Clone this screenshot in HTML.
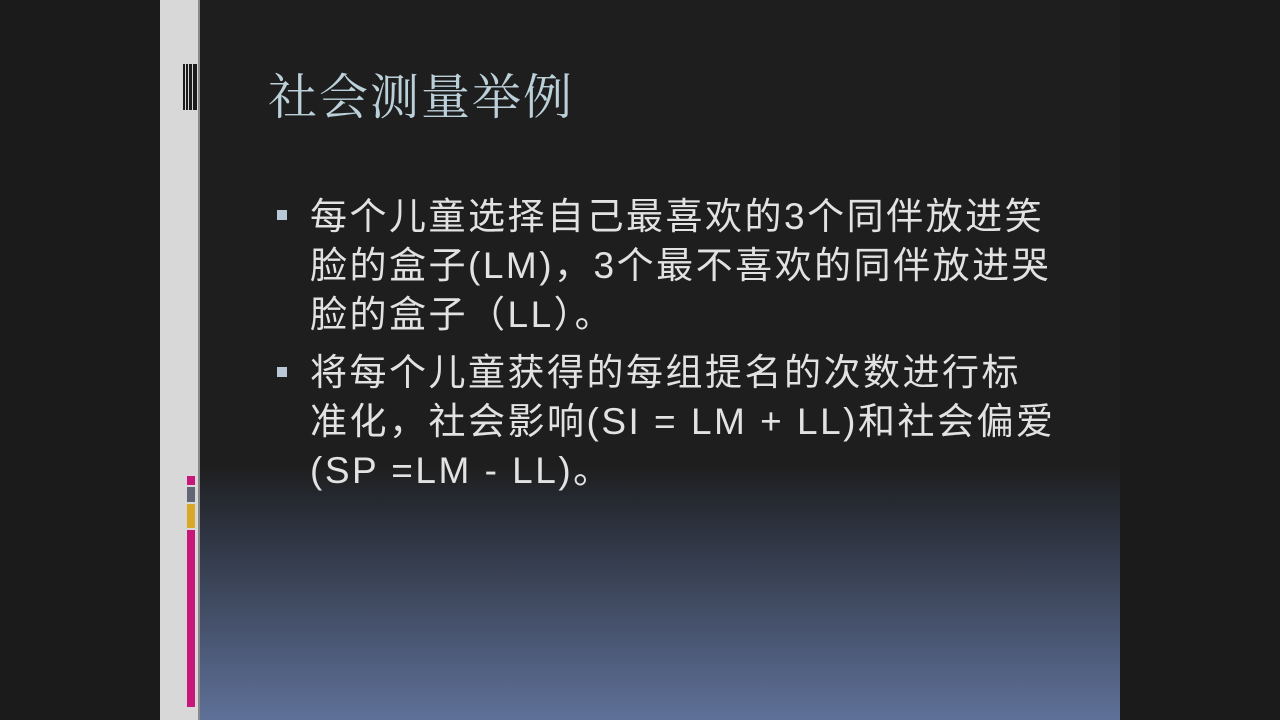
<!DOCTYPE html>
<html><head><meta charset="utf-8"><style>
html,body{margin:0;padding:0;background:#1b1b1b;width:1280px;height:720px;overflow:hidden;position:relative}
.strip{position:absolute;left:160px;top:0;width:38px;height:720px;background:#d8d8d8}
.edge{position:absolute;left:198px;top:0;width:2px;height:720px;background:#8a8a8a}
.slide{position:absolute;left:200px;top:0;width:920px;height:720px;background:linear-gradient(to bottom,#1e1e1e 0,#1e1e1e 465px,#2a2f3a 520px,#5f7199 720px)}
.b{position:absolute;background:#1b1b1b}
.title{position:absolute;left:268px;top:64px;font:49px/60px "Noto Serif CJK SC","Liberation Serif",serif;color:#bcd0da;letter-spacing:2px;white-space:nowrap}
.p{position:absolute;left:310px;width:800px;font:37px/49px "Liberation Sans","Noto Sans CJK SC",sans-serif;color:#e2e2e2;white-space:nowrap;letter-spacing:2.5px}
.bul{position:absolute;left:277px;width:10px;height:10px;background:#b8c8d6}
</style></head><body>
<div class="strip"></div><div class="edge"></div><div class="slide"></div>
<div class="b" style="left:183px;top:64px;width:2px;height:46px"></div>
<div class="b" style="left:186px;top:64px;width:2px;height:46px"></div>
<div class="b" style="left:189px;top:64px;width:3px;height:46px"></div>
<div class="b" style="left:193px;top:64px;width:4px;height:46px"></div>
<div style="position:absolute;left:187px;top:476px;width:8px;height:9px;background:#c8177a"></div>
<div style="position:absolute;left:187px;top:487px;width:8px;height:15px;background:#606674"></div>
<div style="position:absolute;left:187px;top:504px;width:8px;height:24px;background:#d9a828"></div>
<div style="position:absolute;left:187px;top:530px;width:8px;height:177px;background:#c8177a"></div>
<div class="title">社会测量举例</div>
<div class="bul" style="top:210px"></div>
<div class="p" style="top:192px">每个儿童选择自己最喜欢的3个同伴放进笑<br>脸的盒子(LM)，3个最不喜欢的同伴放进哭<br>脸的盒子（LL）。</div>
<div class="bul" style="top:367px"></div>
<div class="p" style="top:348px">将每个儿童获得的每组提名的次数进行标<br>准化，社会影响(SI = LM + LL)和社会偏爱<br>(SP =LM - LL)。</div>
</body></html>
